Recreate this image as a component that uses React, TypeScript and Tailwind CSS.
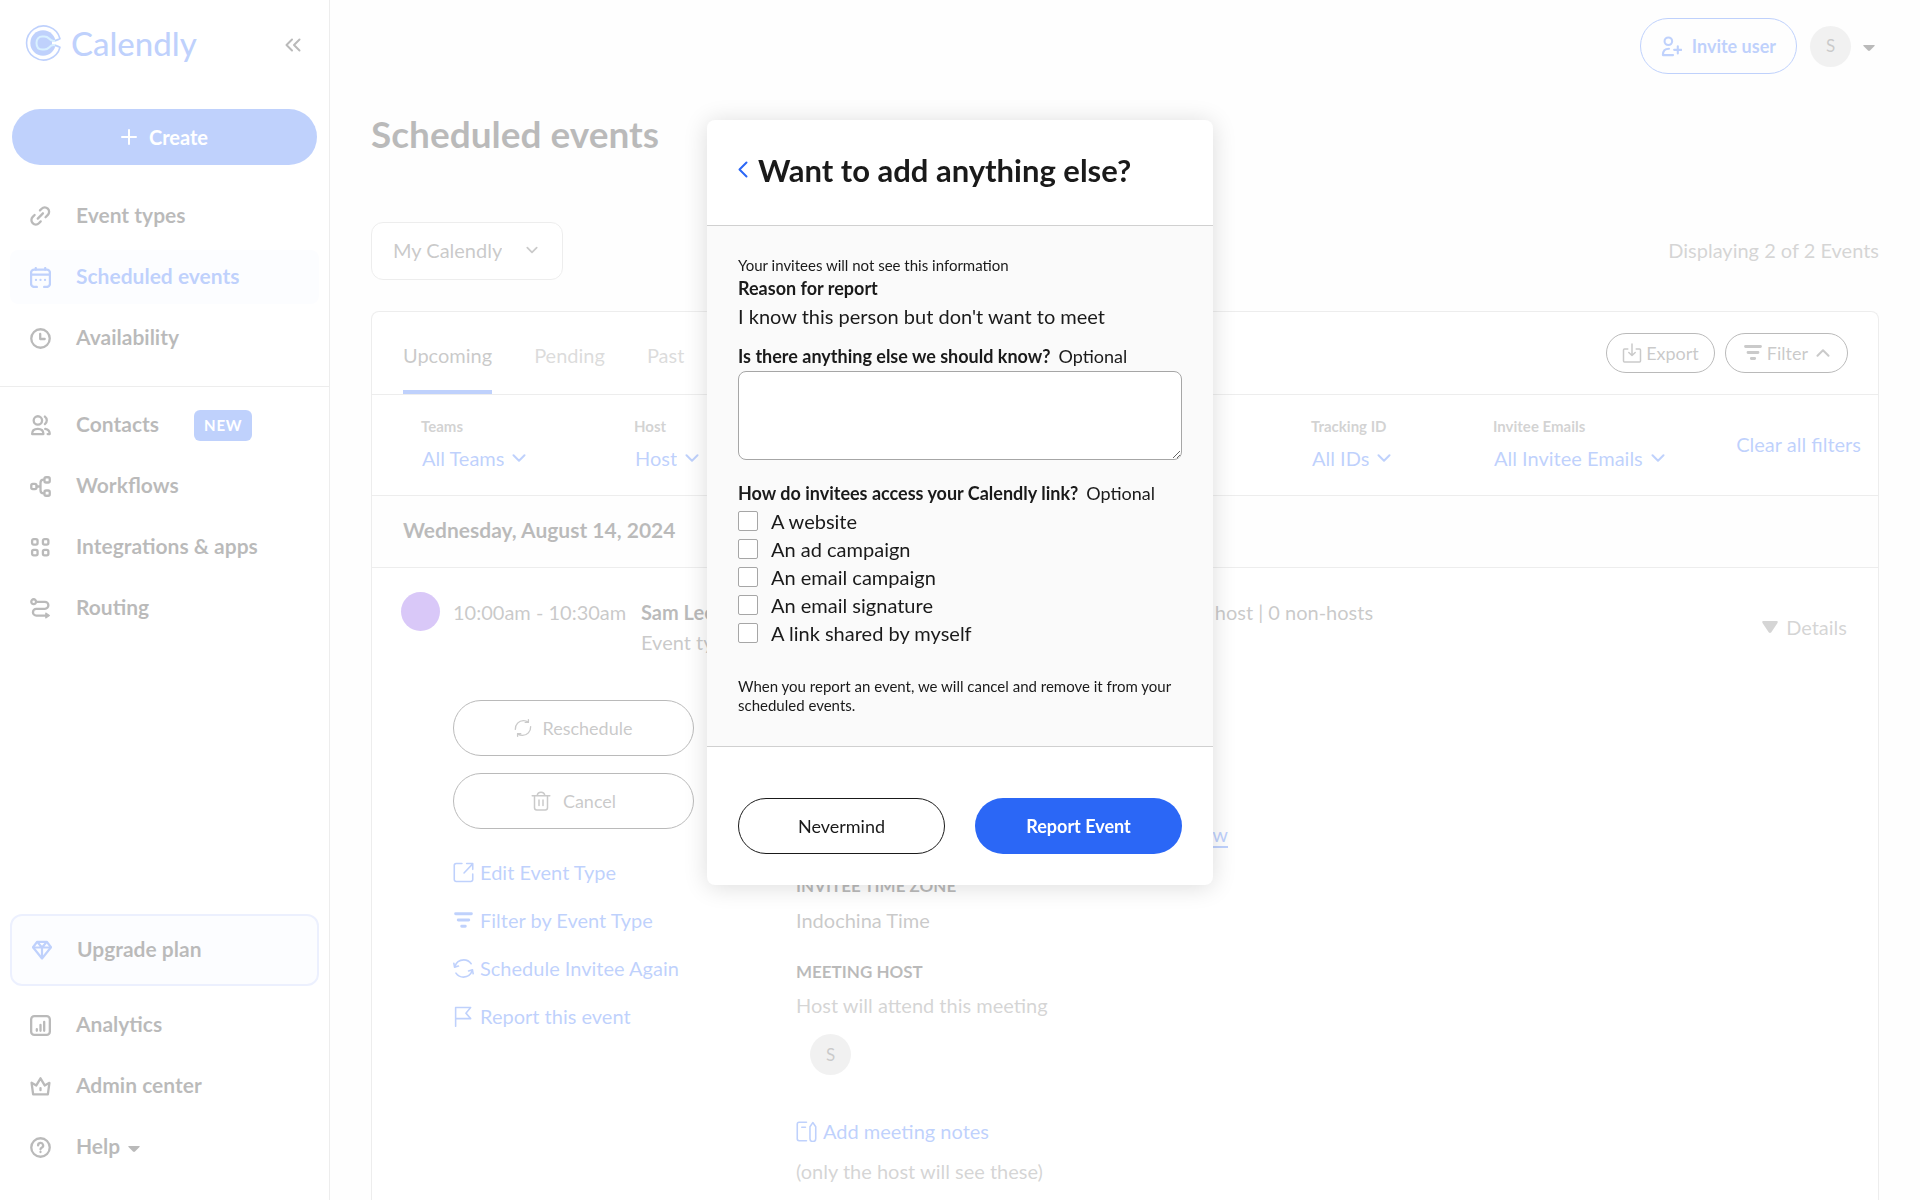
import type { ReactNode } from 'react';

type GlyphProps = { className?: string; box?: string; width?: number; children: ReactNode };

function Glyph({ className = 'size-5', box = '0 0 20 20', width = 2, children }: GlyphProps) {
  return (
    <svg
      viewBox={box}
      className={`shrink-0 ${className}`}
      fill="none"
      stroke="currentColor"
      strokeWidth={width}
      strokeLinecap="round"
      strokeLinejoin="round"
      aria-hidden="true"
    >
      {children}
    </svg>
  );
}

const icons: Record<string, ReactNode> = {
  link: (
    <>
      <path d="M9.5 4.2l1.6-1.6a4.1 4.1 0 0 1 5.9 5.8l-2.2 2.3" />
      <path d="M4.4 8.6L2.6 10.4a4.2 4.2 0 0 0 5.9 6l1.7-1.7" />
      <path d="M7.4 12l4.9-5" />
    </>
  ),
  calendar: (
    <>
      <path d="M6.5 19H4a3 3 0 0 1-3-3V5.5a3 3 0 0 1 3-3h12a3 3 0 0 1 3 3V16a3 3 0 0 1-3 3h-2.5" />
      <path d="M1 7.3h18M5.5 1v1.5M14.5 1v1.5" />
      <path d="M5.7 12.3h.01M10 12.3h.01M14.3 12.3h.01" />
    </>
  ),
  clock: (
    <>
      <circle cx="10" cy="10" r="8.8" />
      <path d="M9.7 5.7V10.5h4.3" />
    </>
  ),
  contacts: (
    <>
      <circle cx="7.5" cy="5.2" r="4" />
      <path d="M2 18.2h10.8c0-3-2-5-5.4-5s-5.4 2-5.4 5z" />
      <path d="M14.2 1.5a4.5 4.5 0 0 1 0 7.2M14.5 13.2c2.6.5 4.3 2.3 4.3 5h-2" />
    </>
  ),
  workflows: (
    <>
      <rect x="1.2" y="7.5" width="5" height="5" rx="1.5" />
      <rect x="13.8" y="1.2" width="5" height="5" rx="1.5" />
      <rect x="13.8" y="13.8" width="5" height="5" rx="1.5" />
      <path d="M6.5 10h3.5M13 3.5c-2.2 0-3 1-3 3v7c0 2 .8 3 3 3" />
    </>
  ),
  apps: (
    <>
      <rect x="2" y="2" width="5.2" height="5.2" rx="1.5" />
      <rect x="12.3" y="2" width="5.2" height="5.2" rx="1.5" />
      <rect x="2" y="12.3" width="5.2" height="5.2" rx="1.5" />
      <rect x="12.3" y="12.3" width="5.2" height="5.2" rx="1.5" />
    </>
  ),
  routing: (
    <>
      <circle cx="3.5" cy="3.5" r="2.3" />
      <path d="M6.5 3.7h7.7a3.3 3.3 0 0 1 0 6.6H6a3.2 3.2 0 0 0 0 6.4h9" />
      <path d="M15 14.3l3.5 2.4-3.5 2.4z" fill="currentColor" strokeWidth="1" />
    </>
  ),
  diamond: (
    <>
      <path d="M5.2 1.8h9.6L19 7.2 10 18.5 1 7.2z" />
      <path d="M1.5 7.5h17M10 17V7.5L6.2 3M10 7.5L13.8 3" />
    </>
  ),
  analytics: (
    <>
      <rect x="1.1" y="1.1" width="17.8" height="17.8" rx="3" />
      <path d="M6.5 13.5v1.5M10 9.5v5.5M13.5 6.5v8.5" />
    </>
  ),
  crown: (
    <>
      <path d="M1.5 6.5L3 17.5h14L18.5 6.5 14 9 10 2.2 6 9z" />
      <path d="M10 11.5v2" />
    </>
  ),
  help: (
    <>
      <circle cx="10" cy="10" r="8.8" />
      <path d="M7.7 8a2.4 2.4 0 1 1 3.4 2.2c-.8.4-1.1.8-1.1 1.5M10 14.3h.01" />
    </>
  ),
  edit: (
    <>
      <path d="M8.5 1.5H3A1.8 1.8 0 0 0 1.2 3.3v13.4A1.8 1.8 0 0 0 3 18.5h14a1.8 1.8 0 0 0 1.8-1.8V11.5" />
      <path d="M10.5 10.5l8-8.5M13 1.5h5.8V7" />
    </>
  ),
  filter: <path d="M2.5 3.5h15M5 9.5h10M8.3 15.5h3.4" strokeWidth="2.8" />,
  sync: (
    <>
      <path d="M1.5 8.5C3 4 6.5 1.8 10.3 1.8c3 0 5.4 1.3 7 3.7M18.5 11.5c-1.5 4.5-4.7 6.7-8.5 6.7-3 0-5.5-1.4-7.2-3.8" />
      <path d="M.8 5l.7 3.7 3.7-1M19.2 15l-.7-3.7-3.7 1" />
    </>
  ),
  refresh: (
    <>
      <path d="M1.5 11.5C1.2 6 5.5 1.8 10.5 1.8c2 0 3.7.5 5.3 1.7M18.5 8.5c.3 5.5-4 9.7-9 9.7-2 0-3.7-.5-5.3-1.7" />
      <path d="M16 .8v3h-3.5M4 19.2v-3h3.5" />
    </>
  ),
  flag: <path d="M2.5 19.3V1.5h14.3l-4.5 5.3 4.5 5.2H2.5" />,
  notes: (
    <>
      <path d="M10 1.2H3A1.8 1.8 0 0 0 1.2 3v14A1.8 1.8 0 0 0 3 18.8h7M5.5 6h3.5" />
      <path d="M13.3 5.5L16 1.5l2.8 4v11.3a2.7 2.7 0 0 1-5.5 0z" />
    </>
  ),
  trash: (
    <path d="M1.2 4.8h17.6M3.5 5v11.7a2.2 2.2 0 0 0 2.2 2.2h8.6a2.2 2.2 0 0 0 2.2-2.2V5M6.2 4.5C6.5 2.3 7.8 1.2 10 1.2s3.5 1.1 3.8 3.3M8 9v5.5M12 9v5.5" />
  ),
  exportDown: (
    <>
      <path d="M5.8 6H2.5a1 1 0 0 0-1 1v11a1 1 0 0 0 1 1h15a1 1 0 0 0 1-1V7a1 1 0 0 0-1-1h-3.3" />
      <path d="M10 1v11.5M6.8 9.5L10 12.5l3.2-3" />
    </>
  ),
  invite: (
    <>
      <circle cx="7" cy="5" r="3.6" />
      <path d="M11.5 18.2H1.8c0-3.8 2.2-6 5.8-6M16 9.7v7M12.5 13.2h7" />
    </>
  ),
};

function Icon({ name, className, width }: { name: string; className?: string; width?: number }) {
  return (
    <Glyph className={className} width={width}>
      {icons[name]}
    </Glyph>
  );
}

function Chevron({ className = 'h-2 w-3.5' }: { className?: string }) {
  return (
    <Glyph box="0 0 14 8" className={className}>
      <path d="M1.5 1.2L7 6.7l5.5-5.5" />
    </Glyph>
  );
}

function Caret({ className }: { className: string }) {
  return (
    <svg viewBox="0 0 12 7" preserveAspectRatio="none" className={className} fill="currentColor" aria-hidden="true">
      <path d="M1 0h10c1 0 1 .8.5 1.3L7 6.5c-.6.6-1.4.6-2 0L.5 1.3C0 .8 0 0 1 0z" />
    </svg>
  );
}

function Logo() {
  return (
    <a href="#" className="flex items-center gap-2.5 text-[#2b67f6]">
      <svg viewBox="0 0 36 36" className="size-9" fill="none" aria-hidden="true">
        <circle cx="18" cy="18" r="12.7" fill="currentColor" />
        <path d="M36 14.5L27 16.5v3l9 2z" fill="#fff" />
        <path
          d="M33.5 14.5l-3.5 1.2c-3 .8-4.5-.5-6-2.2-1.2-1.3-2.8-2-4.7-2h-2c-3.8 0-5.8 2.7-5.8 6.5s2 6.5 5.8 6.5h2c1.9 0 3.5-.7 4.7-2 1.5-1.7 3-3 6-2.2l3.5 1.2"
          stroke="#7fd0ff"
          strokeWidth="2"
        />
        <path
          d="M30 15.7l5-2A17 17 0 1 0 35 22.3l-5-2"
          stroke="currentColor"
          strokeWidth="1.6"
          strokeLinejoin="round"
        />
      </svg>
      <span className="text-[33px] leading-9 font-medium">Calendly</span>
    </a>
  );
}

type NavEntry = { icon: string; label: string; active?: boolean; badge?: string; caret?: boolean };

const mainNav: NavEntry[] = [
  { icon: 'link', label: 'Event types' },
  { icon: 'calendar', label: 'Scheduled events', active: true },
  { icon: 'clock', label: 'Availability' },
];

const toolsNav: NavEntry[] = [
  { icon: 'contacts', label: 'Contacts', badge: 'NEW' },
  { icon: 'workflows', label: 'Workflows' },
  { icon: 'apps', label: 'Integrations & apps' },
  { icon: 'routing', label: 'Routing' },
];

const footerNav: NavEntry[] = [
  { icon: 'analytics', label: 'Analytics' },
  { icon: 'crown', label: 'Admin center' },
  { icon: 'help', label: 'Help', caret: true },
];

function NavList({ items }: { items: NavEntry[] }) {
  return (
    <ul className="flex flex-col gap-[7px] px-2.5">
      {items.map((item) => (
        <li key={item.label}>
          <a
            href="#"
            className={`flex h-[54px] items-center rounded-lg pl-5 ${
              item.active ? 'bg-[#f6f8fe] text-[#2b67f6]' : 'text-[#1a1a1a]'
            }`}
          >
            <Icon name={item.icon} width={2.2} className="size-[21px]" />
            <span className="ml-[25px] pb-0.5 text-[21px] leading-6 font-bold">{item.label}</span>
            {item.caret && <Caret className="mt-1 ml-2 h-1.5 w-3" />}
            {item.badge && (
              <span className="ml-[35px] rounded-md bg-[#2b67f6] px-2.5 text-[15px] leading-[31px] font-bold tracking-wider text-white">
                {item.badge}
              </span>
            )}
          </a>
        </li>
      ))}
    </ul>
  );
}

function Sidebar() {
  return (
    <aside className="flex w-[330px] shrink-0 flex-col border-r border-[#c4c4c4] bg-white pt-[25px] pb-6.5">
      <div className="flex items-center justify-between pr-7 pl-[25px]">
        <Logo />
        <button type="button" aria-label="Collapse sidebar" className="pt-1 text-[#1a1a1a]">
          <Glyph box="0 0 16 14" className="h-3.5 w-4">
            <path d="M7 1.5L1.5 7 7 12.5M14.5 1.5L9 7l5.5 5.5" />
          </Glyph>
        </button>
      </div>

      <div className="mt-12 px-3">
        <button
          type="button"
          className="flex h-14 w-full items-center justify-center gap-3 rounded-full bg-[#2b67f6] text-[20px] font-bold text-white"
        >
          <Glyph box="0 0 16 16" className="size-4">
            <path d="M8 1v14M1 8h14" />
          </Glyph>
          Create
        </button>
      </div>

      <nav className="mt-6 flex grow flex-col">
        <NavList items={mainNav} />
        <hr className="mt-[21px] mb-[11px] border-[#c4c4c4]" />
        <NavList items={toolsNav} />
        <div className="mt-auto px-2.5 pb-3">
          <a
            href="#"
            className="flex h-[72px] items-center rounded-xl border-2 border-[#c0cefb] bg-[#f6f8fe] pl-5 text-[#1a1a1a]"
          >
            <Icon name="diamond" width={2.2} className="size-5 text-[#2b67f6]" />
            <span className="ml-[25px] pb-0.5 text-[21px] leading-6 font-bold">Upgrade plan</span>
          </a>
        </div>
        <NavList items={footerNav} />
      </nav>
    </aside>
  );
}

const filters = [
  { id: 'teams', label: 'Teams', value: 'All Teams', col: 'w-[213px]' },
  { id: 'host', label: 'Host', value: 'Host', col: 'w-[677px]' },
  { id: 'tracking', label: 'Tracking ID', value: 'All IDs', col: 'w-[182px]' },
  { id: 'emails', label: 'Invitee Emails', value: 'All Invitee Emails', col: 'w-[200px]' },
];

function FilterBar() {
  return (
    <div className="flex h-[101px] items-center border-b border-[#c4c4c4] pr-[17px] pb-1 pl-[49px]">
      {filters.map((f) => (
        <div key={f.id} className={`shrink-0 ${f.col}`}>
          <label htmlFor={f.id} className="block text-[15px] leading-5 font-bold text-[#6b6b6b]">
            {f.label}
          </label>
          <div className="mt-2.5 flex items-center gap-2 pl-px text-[#2b67f6]">
            <select id={f.id} className="appearance-none field-sizing-content text-[20px] leading-6">
              <option>{f.value}</option>
            </select>
            <Chevron />
          </div>
        </div>
      ))}
      <button type="button" className="ml-auto pt-0.5 text-[20px] leading-6 whitespace-nowrap text-[#2b67f6]">
        Clear all filters
      </button>
    </div>
  );
}

const eventLinks = [
  { icon: 'edit', label: 'Edit Event Type' },
  { icon: 'filter', label: 'Filter by Event Type' },
  { icon: 'sync', label: 'Schedule Invitee Again' },
  { icon: 'flag', label: 'Report this event' },
];

const pill =
  'flex h-14 items-center justify-center rounded-full border border-[#1a1a1a] text-[18px] text-[#4d4d4d]';

const heading = 'mt-[22px] text-[17px] font-bold text-[#1a1a1a]';

function EventRow() {
  return (
    <article className="pt-6 pr-[31px] pl-[29px] text-[20px] leading-[30px] text-[#4d4d4d]">
      <div className="flex">
        <span className="mr-[13px] size-[39px] shrink-0 rounded-full bg-[#8048e8]" />
        <div className="w-[188px] shrink-0 pt-[5px]">10:00am - 10:30am</div>
        <div className="w-[557px] shrink-0 pt-[5px]">
          <div className="font-bold text-[#1a1a1a]">Sam Lee</div>
          <div>Event type</div>
        </div>
        <div className="pt-[5px]">1 host | 0 non-hosts</div>
        <button type="button" className="mt-1 ml-auto flex items-center gap-2 self-center text-[#737373]">
          <Caret className="h-3 w-4" />
          Details
        </button>
      </div>

      <div className="mt-[27px] flex pl-[52px]">
        <div className="mt-4 w-[241px] shrink-0">
          <div className="flex flex-col gap-[17px]">
            <button type="button" className={`${pill} gap-2.5`}>
              <Icon name="refresh" width={1.5} className="size-[18px]" />
              Reschedule
            </button>
            <button type="button" className={`${pill} gap-3`}>
              <Icon name="trash" width={1.5} />
              Cancel
            </button>
          </div>
          <ul className="mt-7 flex flex-col gap-[18px] whitespace-nowrap text-[#2b67f6]">
            {eventLinks.map((l) => (
              <li key={l.label}>
                <a href="#" className="flex items-center gap-1.5">
                  <Icon name={l.icon} width={1.5} className="size-[21px]" />
                  {l.label}
                </a>
              </li>
            ))}
          </ul>
        </div>

        <div className="ml-[102px] w-[432px] pt-[135px]">
          <div className="text-right">
            <a href="#" className="text-[#2b67f6] underline underline-offset-4">
              Join now
            </a>
          </div>
          <h3 className={heading}>INVITEE TIME ZONE</h3>
          <div className="mt-1">Indochina Time</div>
          <h3 className={heading}>MEETING HOST</h3>
          <div className="mt-[3px] text-[#737373]">Host will attend this meeting</div>
          <div className="mt-3.5 ml-3.5 flex size-[41px] items-center justify-center rounded-full bg-[#d0d0d0] text-[17px]">
            S
          </div>
          <a href="#" className="mt-[41px] flex items-center gap-1.5 text-[#2b67f6]">
            <Icon name="notes" width={1.5} className="size-[21px]" />
            Add meeting notes
          </a>
          <div className="mt-2.5 text-[#737373]">(only the host will see these)</div>
        </div>
      </div>
    </article>
  );
}

const tabs = ['Upcoming', 'Pending', 'Past'];

function EventsCard() {
  return (
    <section className="mt-[31px] grow rounded-t-lg border border-b-0 border-[#c4c4c4] bg-white">
      <div className="flex h-[83px] items-stretch justify-between border-b border-[#c4c4c4] pr-[30px] pl-[31px]">
        <div className="flex gap-[42px]">
          {tabs.map((t, i) => (
            <button
              key={t}
              type="button"
              className={`border-b-4 pt-2 text-[20px] ${
                i === 0 ? 'border-[#2b67f6] text-[#4d4d4d]' : 'border-transparent text-[#8a8a8a]'
              }`}
            >
              {t}
            </button>
          ))}
        </div>
        <div className="flex items-center gap-2.5 text-[18px] text-[#4d4d4d]">
          <button type="button" className="flex h-10 items-center gap-1 rounded-full border border-[#1a1a1a] px-[15px]">
            <Icon name="exportDown" width={1.5} />
            Export
          </button>
          <button type="button" className="flex h-10 items-center gap-1 rounded-full border border-[#1a1a1a] px-[17px]">
            <Icon name="filter" />
            Filter
            <Chevron className="ml-1 h-2 w-3.5 rotate-180" />
          </button>
        </div>
      </div>
      <FilterBar />
      <h2 className="border-b border-[#c4c4c4] bg-[#fafafa] px-[31px] pb-1 text-[21px] leading-[67px] font-bold text-[#1a1a1a]">
        Wednesday, August 14, 2024
      </h2>
      <EventRow />
    </section>
  );
}

const sources = ['A website', 'An ad campaign', 'An email campaign', 'An email signature', 'A link shared by myself'];

function ReportDialog() {
  return (
    <div className="fixed inset-0 flex items-start justify-center bg-white/70 pt-[120px]">
      <form
        role="dialog"
        aria-labelledby="report-title"
        className="w-[506px] overflow-hidden rounded-lg bg-white text-[#1a1a1a] shadow-[0_2px_24px_rgba(0,0,0,0.14)]"
      >
        <header className="flex h-[106px] items-center gap-2.5 border-b border-[#d0d0d0] px-[31px] pb-1.5">
          <button type="button" aria-label="Back" className="text-[#2b67f6]">
            <Glyph box="0 0 10 17" className="h-[17px] w-2.5">
              <path d="M8.5 1.5l-7 7 7 7" />
            </Glyph>
          </button>
          <h1 id="report-title" className="text-[31px] leading-9 font-bold">
            Want to add anything else?
          </h1>
        </header>

        <div className="border-b border-[#d0d0d0] bg-[#fafafa] px-[31px] pt-[29px] pb-[31px]">
          <p className="text-[15px] leading-5">Your invitees will not see this information</p>
          <h2 className="text-[18px] leading-[27px] font-bold">Reason for report</h2>
          <p className="text-[20px] leading-7">I know this person but don't want to meet</p>
          <label htmlFor="comment" className="mt-3 block text-[18px] leading-7">
            <b>Is there anything else we should know?</b>
            <span className="ml-2">Optional</span>
          </label>
          <textarea
            id="comment"
            className="mt-px block h-[89px] w-full resize rounded-lg border border-[#a6a6a6] bg-white p-3 text-[18px]"
          />

          <fieldset className="mt-5">
            <legend className="text-[18px] leading-[27px]">
              <b>How do invitees access your Calendly link?</b>
              <span className="ml-2">Optional</span>
            </legend>
            {sources.map((s) => (
              <label key={s} className="flex items-center gap-[13px] text-[20px] leading-7">
                <input
                  type="checkbox"
                  className="size-5 appearance-none rounded-xs border border-[#a6a6a6] bg-white"
                />
                {s}
              </label>
            ))}
          </fieldset>

          <p className="mt-[30px] text-[15px] leading-[19px]">
            When you report an event, we will cancel and remove it from your scheduled events.
          </p>
        </div>

        <footer className="grid grid-cols-2 gap-[30px] px-[31px] pt-[51px] pb-[31px] text-[18px]">
          <button type="button" className="h-14 rounded-full border border-[#1a1a1a]">
            Nevermind
          </button>
          <button type="submit" className="h-14 rounded-full bg-[#2b67f6] font-bold text-white">
            Report Event
          </button>
        </footer>
      </form>
    </div>
  );
}

export default function App() {
  return (
    <div className="flex h-screen overflow-hidden bg-[#fafafa] font-['Lato',sans-serif] text-[#1a1a1a]">
      <Sidebar />
      <main className="flex min-w-0 grow flex-col overflow-hidden px-[41px]">
        <div className="mt-[18px] flex shrink-0 items-center justify-end gap-[13px] pr-1">
          <button
            type="button"
            className="flex h-14 items-center gap-2.5 rounded-full border border-[#2b67f6] px-5 text-[18px] font-bold text-[#2b67f6]"
          >
            <Icon name="invite" className="size-[21px]" />
            Invite user
          </button>
          <button type="button" className="flex items-center gap-3">
            <span className="flex size-[41px] items-center justify-center rounded-full bg-[#d0d0d0] text-[17px] text-[#4d4d4d]">
              S
            </span>
            <Caret className="mt-1 h-1.5 w-3" />
          </button>
        </div>

        <h1 className="mt-[38px] text-[37px] leading-11 font-bold">Scheduled events</h1>

        <div className="mt-[66px] flex shrink-0 items-center justify-between text-[20px]">
          <div className="flex h-[58px] items-center gap-6 rounded-xl border border-[#c4c4c4] bg-white pr-6 pb-0.5 pl-[21px] text-[#4d4d4d]">
            <select aria-label="Calendar" className="appearance-none field-sizing-content">
              <option>My Calendly</option>
            </select>
            <Chevron className="h-2 w-3" />
          </div>
          <p className="pb-0.5 text-[#737373]">Displaying 2 of 2 Events</p>
        </div>

        <EventsCard />
      </main>
      <ReportDialog />
    </div>
  );
}
